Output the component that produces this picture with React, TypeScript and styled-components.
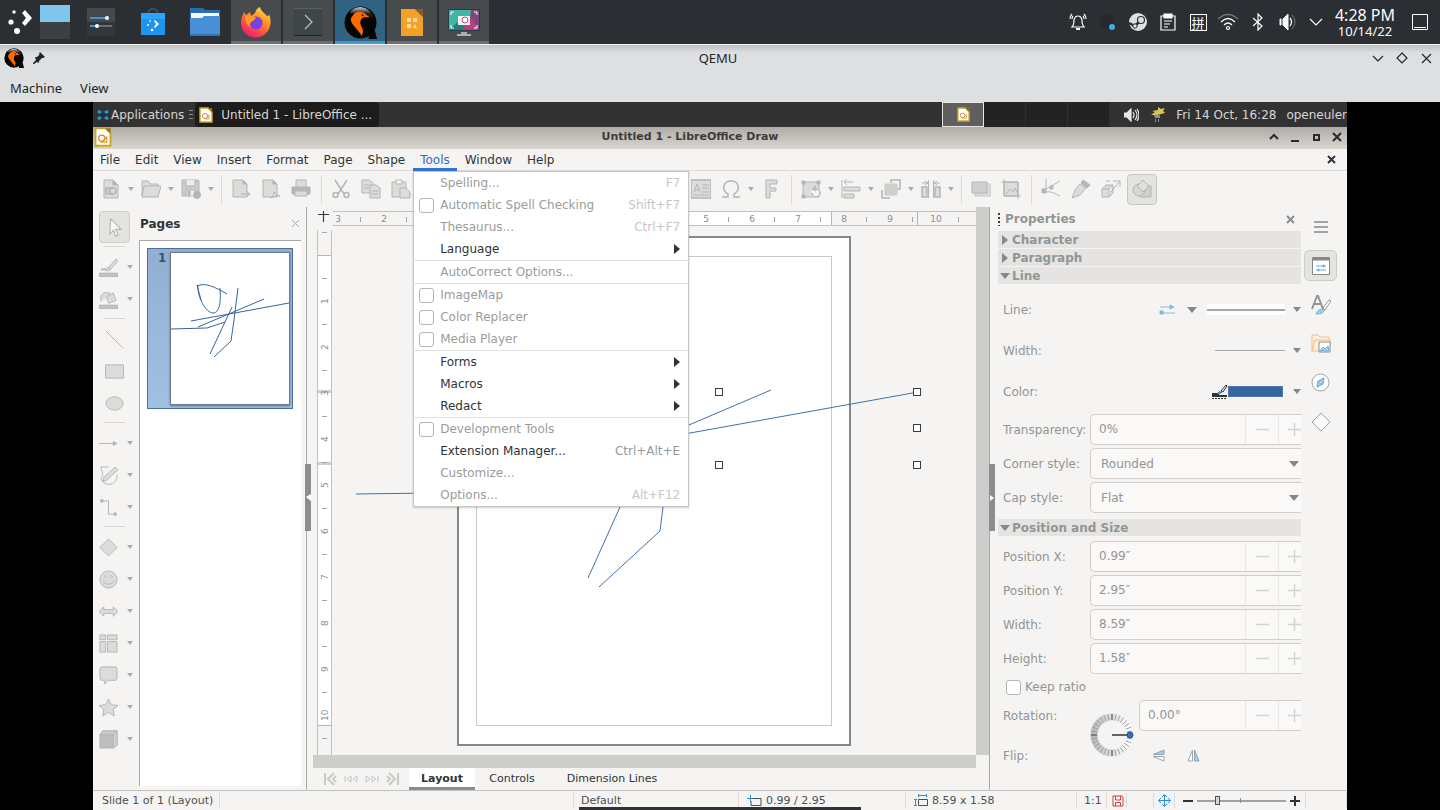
import React from "react";
import styled, { createGlobalStyle, css } from "styled-components";

const GUEST_FONT = '"DejaVu Sans", sans-serif';
const HOST_FONT = '"Noto Sans", "Noto Sans CJK SC", sans-serif';
const STROKE = "#b4b5b4";
const FILL = "#dcdcdb";
const INK = "#2e3436";
const DIM = "#929595";
const BLUE = "#3465a4";

const GlobalStyle = createGlobalStyle`
  *, *::before, *::after { box-sizing: border-box; }
  body { margin: 0; background: #000; overflow: hidden; }
  button { font: inherit; color: inherit; background: none; border: 0; padding: 0; margin: 0; }
  nav, ul { margin: 0; padding: 0; list-style: none; }
  svg { display: block; flex: none; }
`;

const Screen = styled.div`
  display: flex;
  flex-direction: column;
  height: 100vh;
`;

/* ---------- Icon drawings, all on a 20 unit grid ---------- */

const drawings: Record<string, React.ReactNode> = {
  new: <><path d="M3 1h9l5 5v13H3z" /><path d="M12 1v5h5z" fill={STROKE} /><path d="M5 15V9h7v6z" fill="#cbcbca" strokeWidth="1.500" /><circle cx="12" cy="12" r="3" strokeWidth="1.500" /></>,
  open: <><path d="M1 17V2h6l2 3h8v3" /><path d="M3 7h17l-3 11H1z" /></>,
  save: <><path d="M1 1h16l1 1v15H1z" fill="#cbcbca" /><path d="M5 1v6h9V1M5 17v-6h9v6" fill="#ececeb" /><path d="M7 12h2v5H7z" fill={STROKE} /><circle cx="16" cy="16" r="3.500" fill={STROKE} /></>,
  export: <><path d="M2 1h10l4 4v13H2z" /><path d="M12 1v4h4z" fill={STROKE} /><path d="M10 15h9M15 12l4 3-4 3" fill="none" /></>,
  pdf: <><path d="M2 1h10l4 4v13H2z" /><path d="M12 1v4h4z" fill={STROKE} /><path d="M9 19c2-1 4-3 4-6 1 3 3 4 6 4-3-1-6 0-10 2z" fill="#f5f4f2" /></>,
  print: <><path d="M5 8V1h10v7" /><path d="M1 8h18v7H1z" fill={STROKE} /><path d="M4 12h12v5H4z" /></>,
  cut: <><path d="M4 1l9 14M16 1L7 15" fill="none" strokeWidth="1.500" /><circle cx="4.500" cy="16" r="2.500" fill="none" strokeWidth="1.500" /><circle cx="15.500" cy="16" r="2.500" fill="none" strokeWidth="1.500" /></>,
  copy: <><path d="M1 1h7l4 3v10H1z" /><path d="M3 6h5M3 9h5" /><path d="M9 6h6l4 3v10H9z" /><path d="M11 12h6M11 15h6" /></>,
  paste: <><path d="M1 3h14v15H1z" /><path d="M5 1h6v4H5z" fill="#f5f4f2" /><path d="M9 9h6l4 4v6H9z" /></>,
  grid: <path d="M2 2h16v16H2zM2 7h16M2 12h16M7 2v16M12 2v16" />,
  undo: <path d="M5 4L2 8l4 3M2 8h10q6 0 6 6v3" fill="none" />,
  textbox: <><path d="M0 1h20v18H0z" strokeWidth="1.500" /><path d="M3 13L6 5l3 8M4 11h4M11 6h7M11 9h7M3 16h15M11 13h7" fill="none" strokeWidth="1" /></>,
  omega: <path d="M1 18h6v-3C0 11 2 2 10 2s10 9 3 13v3h6" fill="none" strokeWidth="1.500" />,
  fontwork: <path d="M5 1h11v4H9v4h6v3H9v7H5z" />,
  transform: <><path d="M2 3h16v15H2z" /><path d="M1 2h3v3H1zM16 2h3v3h-3zM1 16h3v3H1z" fill={STROKE} /><circle cx="15" cy="14" r="5" fill="#f5f4f2" stroke="none" /><path d="M11 14a4 4 0 1 0 4-4h-2M15 7l-3 3 3 2" fill="none" strokeWidth="1.500" /></>,
  align: <><path d="M1 1v18M3 3h9M6 0L3 3l3 3" fill="none" /><path d="M3 8h16v4H3zM3 15h10v4H3z" /></>,
  arrange: <><path d="M10 4V1h9v9h-3M1 11v8h8" fill="none" strokeWidth="1.500" /><path d="M4 5h12v11H4z" fill="#d0d0cf" stroke="#cacaca" /></>,
  distribute: <><path d="M1 8h5v10H1zM14 8h5v10h-5z" strokeWidth="1.500" /><path d="M7.500 1v18M12.500 1v18M1 4h6M19 4h-6M4 2l3 2-3 2M16 2l-3 2 3 2" fill="none" /></>,
  shadow: <><path d="M4 5h16v12H4z" fill={FILL} stroke="#c8c8c8" /><path d="M1 3h15v11H1z" fill="#cfcfce" /></>,
  crop: <><path d="M3 3h14v14H3z" /><path d="M0 3h17v17M3 0v17h17M5 15l4-5 3 3 2-4 3 6" fill="none" /></>,
  points: <><path d="M5 0v10l14-8M5 13c6-1 9 2 14 4" fill="none" /><path d="M1 10h4v4H1zM9 7h3v3H9z" fill={STROKE} /></>,
  glue: <><path d="M9 5l6 4-6 7-8 3 3-8z" /><path d="M12 1l7 5-3 3-6-5z" fill={STROKE} /></>,
  extrude: <><path d="M1 10h7v8H1zM1 10l4-4h7l-4 4M12 6v8l-4 4" /><path d="M5 2h4M12 2h7l-9 11M19 2v6" fill="none" /></>,
  shapes: <><path d="M8 7h11v11H8z" fill="#cfcfce" /><circle cx="7" cy="11" r="6" fill="#d6d6d4" /><path d="M11 1l6 6-6 6-6-6z" fill="#dfdfdc" /></>,
  pointer: <path d="M6 1l11 11h-6l3 6-3 1-2-6-4 4z" fill="#fafaf9" strokeWidth="1.2" />,
  lineColor: <><path d="M2 12h7" strokeWidth="2" /><path d="M10 10l8-9 2 2-8 9zM7 13c0-3 3-4 5-1-1 2-3 2-5 1z" /><path d="M0 16h20v4H0z" fill="#c2c2c2" /></>,
  fillColor: <><path d="M2 12V6l3-3h6v4M8 7l7-4 3 8-8 3z" /><path d="M0 16h20v4H0z" fill="#c2c2c2" /></>,
  line: <path d="M1 1l18 18" />,
  rect: <path d="M0.500 3h19v14h-19z" />,
  ellipse: <ellipse cx="10" cy="10" rx="9" ry="7" />,
  arrow: <><path d="M0 10h17" /><path d="M15 8l4 2-4 2z" fill={STROKE} /></>,
  curve: <><path d="M2 1h8M2 1l2 9-2 4 4 4M19 9c1 12-12 13-16 6" fill="none" /><path d="M17 1l3 3L8 15l-4 1 1-4z" /></>,
  connector: <><path d="M3 3h7v14h7" fill="none" /><circle cx="3" cy="3" r="1.500" fill={STROKE} /><circle cx="17" cy="17" r="1.500" fill={STROKE} /></>,
  diamond: <path d="M10 1l9 9-9 9-9-9z" />,
  smiley: <><circle cx="10" cy="10" r="9" /><circle cx="7" cy="7" r="1" fill="#fff" /><circle cx="13" cy="7" r="1" fill="#fff" /><path d="M4 12q6 6 12 0" fill="none" /></>,
  doubleArrow: <path d="M0 10l5-5v3h10V5l5 5-5 5v-3H5v3z" />,
  flow: <path d="M1 1h6v5H1zM9 1h10v5H9zM1 8h6v11H1zM9 8h10v11H9z" />,
  callout: <path d="M2 1h16l1 2v10l-1 2H10l-4 4v-4H2l-1-2V3z" />,
  star: <path d="M10 1l3 6 7 1-5 4 1 7-6-4-6 4 1-7-5-4 7-1z" />,
  cube: <><path d="M1 5l3-4h15v15l-4 3H1z" fill="#bdbdbd" /><path d="M1 5l3-4h15l-4 4z" fill="#c9c9c8" /><path d="M15 5l4-4v15l-4 3z" fill="#d0d0cf" /></>,
};

function Glyph({ name, size = 19 }: { name: string; size?: number }) {
  return (
    <svg width={size} height={size} viewBox="0 0 20 20" fill={FILL} stroke={STROKE} strokeWidth="1" aria-hidden="true">
      {drawings[name]}
    </svg>
  );
}

const Triangle = styled.span<{ $right?: boolean; $color?: string; $size?: number }>`
  flex: none;
  width: 0;
  height: 0;
  border: ${(p) => p.$size ?? 3}px solid transparent;
  ${(p) =>
    p.$right
      ? css`
          border-left: ${(p.$size ?? 3) + 1}px solid ${p.$color ?? "#a9abab"};
          border-right: 0;
        `
      : css`
          border-top: ${(p.$size ?? 3) + 1}px solid ${p.$color ?? "#a9abab"};
          border-bottom: 0;
        `}
`;

/* ---------- Host desktop ---------- */

const Taskbar = styled.header`
  display: flex;
  align-items: center;
  flex: none;
  height: 44px;
  padding: 0 12px 0 0;
  background: #2b2e32;
  color: #fcfcfc;
  font-family: ${HOST_FONT};
`;

const Launcher = styled.button`
  display: grid;
  place-items: center;
  width: 40px;
  height: 44px;
`;

const Pager = styled.div`
  width: 30px;
  height: 34px;
  margin-right: 5px;
  background: linear-gradient(#7fc5ec 50%, #3c4044 50%);
`;

const AppButton = styled.button<{ $state?: "open" | "active" }>`
  display: grid;
  place-items: center;
  width: ${(p) => (p.$state ? 50 : 52)}px;
  height: 44px;
  margin-right: ${(p) => (p.$state ? 2 : 0)}px;
  ${(p) => p.$state === "open" && css`background: linear-gradient(#484b4e 41px, #6c6e71 41px);`}
  ${(p) => p.$state === "active" && css`background: linear-gradient(#306381 41px, #3d9bd1 41px);`}
`;

const Tray = styled.div`
  display: flex;
  align-items: center;
  margin-left: auto;
`;

const TrayButton = styled.button<{ $w?: number }>`
  display: grid;
  place-items: center;
  width: ${(p) => p.$w ?? 30}px;
  height: 44px;
`;

const HostClock = styled.time`
  display: flex;
  flex-direction: column;
  align-items: center;
  width: 66px;
  margin: 0 14px 0 3px;
  font-size: 13px;
  line-height: 14px;
  strong { font-size: 16px; line-height: 18px; font-weight: 400; }
`;

const HostWindow = styled.div`
  flex: none;
  height: 58px;
  border-top: 1px solid #f4f4f4;
  background: linear-gradient(#bfc0c2, #dddfe1 8px);
  color: #232629;
  font-family: ${HOST_FONT};
  font-size: 13px;
  line-height: 18px;
`;

const HostTitle = styled.div`
  display: grid;
  grid-template-columns: 1fr auto 1fr;
  align-items: center;
  height: 26px;
  padding: 0 8px 0 4px;
`;

const HostTitleGroup = styled.div<{ $end?: boolean }>`
  display: flex;
  align-items: center;
  gap: ${(p) => (p.$end ? 12 : 8)}px;
  justify-content: ${(p) => (p.$end ? "flex-end" : "flex-start")};
`;

const HostMenu = styled.nav`
  display: flex;
  align-items: center;
  gap: 18px;
  height: 31px;
  padding: 2px 0 0 10px;
`;

function QemuLogo({ size }: { size: number }) {
  return (
    <svg width={size} height={size} viewBox="0 0 32 32">
      <defs>
        <linearGradient id="qemuShine" x1="0" y1="0" x2="0" y2="1">
          <stop offset="0" stopColor="#c8c8c8" />
          <stop offset=".6" stopColor="#1a1a1a" />
        </linearGradient>
      </defs>
      <circle cx="16" cy="16" r="15.5" fill="#050505" />
      <path d="M5 7Q9 1 16 1Q26 2 29 12Q22 8 15 8Z" fill="url(#qemuShine)" />
      <path d="M24 24h6l2 8h-8z" fill="#050505" />
      <path d="M8 10C11 4 18 5 21 8l4 3-6 0c-4 2-4 7-1 11 1 3 0 5-1 7-2-5-8-9-10-14C6 13 7 11 8 10z" fill="#ff6a00" />
      <circle cx="18" cy="9" r="1" fill="#2a1000" />
    </svg>
  );
}

function HostTaskbar() {
  return (
    <Taskbar>
      <Launcher aria-label="Application launcher">
        <svg width="24" height="26" viewBox="0 0 24 26" fill="#fff">
          <circle cx="6" cy="3" r="1.7" /><circle cx="3" cy="13" r="2.6" /><circle cx="9" cy="22" r="3" />
          <path d="M14 4l3-3 7 8-7 8-3-3 4-5z" />
        </svg>
      </Launcher>
      <Pager />
      <AppButton aria-label="System Settings">
        <svg width="28" height="28" viewBox="0 0 28 28">
          <path d="M0 0h28v28H0z" fill="#33373a" /><path d="M0 0h28v14H0z" fill="#45494c" />
          <path d="M3 10h18" stroke="#3f93cf" strokeWidth="2" /><circle cx="20" cy="10" r="2" fill="#fff" />
          <path d="M3 18h6" stroke="#3f93cf" strokeWidth="2" /><path d="M10 18h15" stroke="#6b6e72" strokeWidth="2" /><circle cx="10" cy="18" r="2" fill="#fff" />
        </svg>
      </AppButton>
      <AppButton aria-label="Discover">
        <svg width="24" height="28" viewBox="0 0 24 28">
          <path d="M7 9V6q0-5 5-5t5 5v3" fill="none" stroke="#2d5d78" strokeWidth="1.5" />
          <path d="M0 5h24v22H0z" fill="#1d94ee" /><path d="M0 5h24v6H0z" fill="#28a5fb" />
          <path d="M13 13l1-1 4 4-4 4-1-1 2-3z" fill="#fff" /><circle cx="9" cy="13" r="1" fill="#bfe3ff" /><circle cx="7" cy="17" r="1" fill="#fff" /><circle cx="11" cy="22" r="1.300" fill="#fff" />
        </svg>
      </AppButton>
      <AppButton aria-label="Files">
        <svg width="30" height="28" viewBox="0 0 30 28">
          <path d="M0 0h13l2 2h15v10H0z" fill="#2c6ea9" /><path d="M1 5h28v8H1z" fill="#f4f8fb" />
          <path d="M0 10h12l2-2h16v20H0z" fill="#4790d8" /><path d="M0 26h30v2H0z" fill="#3475b9" />
        </svg>
      </AppButton>
      <AppButton $state="open" aria-label="Firefox">
        <svg width="32" height="32" viewBox="0 0 32 32">
          <defs>
            <linearGradient id="foxBody" x1=".8" y1="0" x2=".2" y2="1">
              <stop offset="0" stopColor="#ffe243" /><stop offset=".4" stopColor="#ff8a22" /><stop offset=".75" stopColor="#ff3a55" /><stop offset="1" stopColor="#e2177f" />
            </linearGradient>
          </defs>
          <path d="M20 1c1 5 5 6 7 9 1 1 2-1 2-2 2 4 3 14-3 19-6 6-16 6-21 0C1 23 0 16 2 11l2-5 2 3 4-3 1 4 4-3c1-3 2-5 5-6z" fill="url(#foxBody)" />
          <circle cx="16" cy="17" r="6.5" fill="#7542e5" />
          <path d="M5 10c4-2 8 0 11 2l-3 3c-3 1-4 4-2 6-3 0-6-5-6-11z" fill="#ff9a24" />
        </svg>
      </AppButton>
      <AppButton $state="open" aria-label="Terminal">
        <svg width="28" height="28" viewBox="0 0 28 28">
          <path d="M0 0h28v28H0z" fill="#3f4649" /><path d="M0 27.500h28" stroke="#202427" />
          <path d="M0 .5h28" stroke="#566064" /><path d="M11 7l7 7-7 7" fill="none" stroke="#b5bbbd" strokeWidth="1.3" />
        </svg>
      </AppButton>
      <AppButton $state="active" aria-label="QEMU"><QemuLogo size={33} /></AppButton>
      <AppButton $state="open" aria-label="LibreOffice Draw">
        <svg width="22" height="27" viewBox="0 0 22 27">
          <path d="M0 0h14l8 8v19H0z" fill="#f2a127" /><path d="M14 0h8v8z" fill="#8a5c14" />
          <path d="M6 9h4v4H6zM12 9h4v4h-4zM6 15h4v4H6zM14 15l2 4h-4z" fill="#fbd79c" />
        </svg>
      </AppButton>
      <AppButton $state="open" aria-label="Spectacle">
        <svg width="32" height="28" viewBox="0 0 32 28">
          <path d="M0 1h32v22H0z" fill="#2c3c44" /><path d="M1 2h30v20H1z" fill="#43b5a8" /><path d="M1 22L14 10l8 12z" fill="#247f7c" /><path d="M23 2h8v20H20z" fill="#7a4a78" /><path d="M14 22l10-12 6 12z" fill="#c13d83" />
          <path d="M3 7V4h3M26 4h3v3M3 17v3h3M26 20h3v-3" fill="none" stroke="#fff" />
          <path d="M10 8h12v9H10z" fill="#f5f5f5" /><circle cx="17" cy="12" r="3" fill="#fff" stroke="#c0506f" /><path d="M13 25h6M9 27h14" stroke="#d0d0d0" strokeWidth="1.500" />
        </svg>
      </AppButton>

      <Tray>
        <TrayButton aria-label="Notifications">
          <svg width="18" height="18" viewBox="0 0 18 18" fill="none" stroke="#fcfcfc" strokeWidth="1.2">
            <path d="M3 14h12q-2-2-2-7-1-4-4-4T5 7q0 5-2 7zM1 6q0-3 2-5M17 6q0-3-2-5M3 6q0-2 1-3M15 6q0-2-1-3" /><path d="M7 16h4" strokeWidth="2" />
          </svg>
        </TrayButton>
        <TrayButton aria-label="Sync status">
          <svg width="18" height="18" viewBox="0 0 18 18"><circle cx="8" cy="8" r="7" fill="#25282c" /><circle cx="13" cy="14" r="3" fill="#3daee9" /></svg>
        </TrayButton>
        <TrayButton aria-label="Steam">
          <svg width="18" height="18" viewBox="0 0 18 18">
            <circle cx="9" cy="9" r="9" fill="#dedfe0" /><path d="M0 10l6 3 5-5" fill="none" stroke="#2b2e32" strokeWidth="2.500" />
            <circle cx="12" cy="7" r="3.500" fill="#dedfe0" stroke="#2b2e32" strokeWidth="1.200" /><circle cx="6" cy="13" r="2.200" fill="#dedfe0" stroke="#2b2e32" />
          </svg>
        </TrayButton>
        <TrayButton aria-label="Clipboard">
          <svg width="16" height="18" viewBox="0 0 16 18" fill="none" stroke="#fcfcfc" strokeWidth="1.200"><path d="M1 3h14v14H1zM4 8h8M4 11h6M4 14h4" /><path d="M4 1h8v4H4z" fill="#fcfcfc" /></svg>
        </TrayButton>
        <TrayButton aria-label="Input method"><InputBadge lang="zh-CN">拼</InputBadge></TrayButton>
        <TrayButton aria-label="Network">
          <svg width="22" height="18" viewBox="0 0 22 18" fill="none" stroke="#fcfcfc" strokeWidth="1.200">
            <path d="M1 6q10-9 20 0" stroke="#74777a" /><path d="M4 9q7-7 14 0M7 12q4-4 8 0" /><circle cx="11" cy="15" r="1.500" />
          </svg>
        </TrayButton>
        <TrayButton aria-label="Bluetooth">
          <svg width="12" height="18" viewBox="0 0 12 18" fill="none" stroke="#fcfcfc" strokeWidth="1.200"><path d="M1 5l9 8-4 4V1l4 4-9 8" /></svg>
        </TrayButton>
        <TrayButton aria-label="Volume">
          <svg width="18" height="18" viewBox="0 0 18 18" fill="none" stroke="#fcfcfc"><path d="M1 6h1v6H1zM4 6l5-5v16l-5-5z" fill="#fcfcfc" /><path d="M11 5q3 4 0 8" strokeWidth="1.300" /><path d="M13 2q6 7 0 14" stroke="#74777a" /></svg>
        </TrayButton>
        <TrayButton $w={26} aria-label="Show hidden icons">
          <svg width="14" height="8" viewBox="0 0 14 8" fill="none" stroke="#fcfcfc" strokeWidth="1.200"><path d="M1 1l6 6 6-6" /></svg>
        </TrayButton>
        <HostClock><strong>4:28 PM</strong><span>10/14/22</span></HostClock>
        <TrayButton $w={16} aria-label="Show desktop">
          <svg width="16" height="16" viewBox="0 0 16 16" fill="none" stroke="#fcfcfc"><path d="M.5.5h15v15H.5zM2 13.500h12" /></svg>
        </TrayButton>
      </Tray>
    </Taskbar>
  );
}

const InputBadge = styled.span`
  display: flex;
  align-items: center;
  justify-content: center;
  width: 17px;
  height: 17px;
  border: 1px solid #fcfcfc;
  font: 13px "Noto Sans CJK SC", sans-serif;
  line-height: 15px;
`;

function HostFrame() {
  return (
    <HostWindow>
      <HostTitle>
        <HostTitleGroup>
          <QemuLogo size={20} />
          <svg width="14" height="14" viewBox="0 0 14 14" fill="#232629"><path d="M8 2l4 4-1 1-1 0-3 3v2l-2-1-3 2-1 0 0-1 3-3-1-3h2l3-3z" /><path d="M8 1l5 5-2 1-4-4z" /></svg>
        </HostTitleGroup>
        <span>QEMU</span>
        <HostTitleGroup $end>
          <button aria-label="Minimize"><svg width="12" height="12" viewBox="0 0 12 12" fill="none" stroke="#232629" strokeWidth="1.200"><path d="M1 4l5 5 5-5" /></svg></button>
          <button aria-label="Maximize"><svg width="12" height="12" viewBox="0 0 12 12" fill="none" stroke="#232629" strokeWidth="1.200"><path d="M6 1l5 5-5 5-5-5z" /></svg></button>
          <button aria-label="Close"><svg width="12" height="12" viewBox="0 0 12 12" fill="none" stroke="#232629" strokeWidth="1.200"><path d="M2 2l9 9M11 2l-9 9" /></svg></button>
        </HostTitleGroup>
      </HostTitle>
      <HostMenu><button>Machine</button><button>View</button></HostMenu>
    </HostWindow>
  );
}

/* ---------- Guest desktop ---------- */

const Display = styled.div`
  flex: 1;
  min-height: 0;
  display: flex;
  padding: 0 93px;
  background: #000;
`;

const Guest = styled.div`
  flex: 1;
  min-width: 0;
  display: flex;
  flex-direction: column;
  overflow: hidden;
  background: #f5f4f2;
  color: ${INK};
  font-family: ${GUEST_FONT};
  font-size: 12px;
  line-height: 16px;
`;

const GuestPanel = styled.div`
  display: flex;
  align-items: center;
  flex: none;
  height: 25px;
  padding-left: 4px;
  background: #323232;
  color: #d6d6d6;
  white-space: nowrap;
`;

const AppsButton = styled.button`
  display: flex;
  align-items: center;
  gap: 2px;
`;

const PanelGrip = styled.span`
  width: 4px;
  height: 9px;
  margin: 0 2px 0 5px;
  background: repeating-linear-gradient(#8a8a8a 0 1px, transparent 1px 4px);
`;

const TaskButton = styled.button`
  display: flex;
  align-items: center;
  gap: 8px;
  width: 184px;
  height: 25px;
  padding-left: 4px;
  border-radius: 4px;
  background: #1c1c1c;
`;

const GuestPager = styled.div`
  display: grid;
  grid-template-columns: repeat(4, 42px);
  height: 25px;
  margin-left: auto;
  background: #232323;
`;

const PagerCell = styled.div<{ $active?: boolean }>`
  display: grid;
  place-items: center;
  border-right: 1px solid #303030;
  ${(p) => p.$active && css`background: #5f5f5f; border: 1px solid #e6e6e6;`}
`;

const GuestStatus = styled.div`
  display: flex;
  align-items: center;
  padding-left: 14px;
  gap: 10px;
`;

function DrawIcon({ w = 14 }: { w?: number }) {
  return (
    <svg width={w} height={w + 2} viewBox="0 0 14 16">
      <path d="M1 1h8l4 4v10H1z" fill="#fff" stroke="#c9a52a" strokeWidth="1.500" /><path d="M9 1h4v4z" fill="#8e7217" />
      <circle cx="6" cy="9" r="2.500" fill="none" stroke="#e07a4a" /><path d="M6 12l4-4v4z" fill="none" stroke="#d9a21d" />
    </svg>
  );
}

const TitleBar = styled.div`
  display: grid;
  grid-template-columns: auto 1fr auto;
  align-items: center;
  flex: none;
  height: 22px;
  padding: 0 4px 2px 1px;
  background: linear-gradient(#b0aba7, #d9d5d1);
  font-size: 11px;
  font-weight: 700;
  color: #3c3c3a;
  text-align: center;
`;

const WindowButtons = styled.div`
  display: flex;
  justify-content: flex-end;
  gap: 9px;
`;

const MenuBar = styled.nav`
  display: flex;
  align-items: stretch;
  gap: 1px;
  flex: none;
  height: 22px;
  border-bottom: 1px solid #dcdad8;
`;

const MenuHost = styled.div`
  position: relative;
  display: flex;
`;

const MenuButton = styled.button<{ $open?: boolean }>`
  height: 22px;
  padding: 3px 7px 0;
  border-bottom: 3px solid ${(p) => (p.$open ? "#3071cc" : "transparent")};
  color: ${(p) => (p.$open ? "#2f6dc0" : "inherit")};
`;

const MenuClose = styled.button`
  margin: 0 11px 0 auto;
`;

const Dropdown = styled.ul`
  position: absolute;
  z-index: 10;
  top: 22px;
  left: 0;
  width: 276px;
  border: 1px solid #c9c7c5;
  background: #fff;
  box-shadow: 0 1px 2px rgba(0, 0, 0, 0.2);
`;

const DropItem = styled.li<{ $disabled?: boolean; $rule?: boolean }>`
  display: grid;
  grid-template-columns: 26px 1fr auto;
  align-items: center;
  height: ${(p) => (p.$rule ? 23 : 22)}px;
  padding-right: 8px;
  border-top: ${(p) => (p.$rule ? "1px solid #e0e0df" : "0")};
  color: ${(p) => (p.$disabled ? "#9a9c9c" : INK)};
  label, button { text-align: left; white-space: nowrap; }
`;

const Shortcut = styled.span<{ $disabled?: boolean }>`
  color: ${(p) => (p.$disabled ? "#c6c7c7" : "#96999a")};
`;

const Check = styled.input`
  appearance: none;
  width: 15px;
  height: 15px;
  margin: 0 0 0 5px;
  border: 1px solid #b4b4b3;
  border-radius: 3px;
  background: #fff;
`;

type Entry = { text: string; key?: string; check?: boolean; sub?: boolean; on?: boolean; rule?: boolean };
const entries: Entry[] = [
  { text: "Spelling...", key: "F7" },
  { text: "Automatic Spell Checking", key: "Shift+F7", check: true },
  { text: "Thesaurus...", key: "Ctrl+F7" },
  { text: "Language", sub: true, on: true },
  { text: "AutoCorrect Options...", rule: true },
  { text: "ImageMap", check: true, rule: true },
  { text: "Color Replacer", check: true },
  { text: "Media Player", check: true },
  { text: "Forms", sub: true, on: true, rule: true },
  { text: "Macros", sub: true, on: true },
  { text: "Redact", sub: true, on: true },
  { text: "Development Tools", check: true, rule: true },
  { text: "Extension Manager...", key: "Ctrl+Alt+E", on: true },
  { text: "Customize..." },
  { text: "Options...", key: "Alt+F12" },
];

function ToolsMenu() {
  return (
    <Dropdown>
      {entries.map((e) => {
        const id = "tool-" + e.text.replace(/\W/g, "");
        return (
          <DropItem key={e.text} $disabled={!e.on} $rule={e.rule}>
            {e.check ? <Check type="checkbox" id={id} disabled /> : <span />}
            {e.check ? <label htmlFor={id}>{e.text}</label> : <button disabled={!e.on}>{e.text}</button>}
            {e.sub ? <Triangle $right $color={INK} $size={5} /> : <Shortcut $disabled={!e.on}>{e.key}</Shortcut>}
          </DropItem>
        );
      })}
    </Dropdown>
  );
}

const Toolbar = styled.div`
  display: flex;
  align-items: center;
  flex: none;
  height: 36px;
  padding-left: 4px;
`;

const ToolButton = styled.button<{ $drop?: boolean; $active?: boolean }>`
  display: flex;
  align-items: center;
  justify-content: space-between;
  flex: none;
  width: ${(p) => (p.$drop ? 40 : 30)}px;
  height: 31px;
  padding: 0 3px 0 4px;
  ${(p) => p.$active && css`border: 1px solid #c8c7c3; border-radius: 4px; background: #e3e3df;`}
`;

const ToolRule = styled.span`
  flex: none;
  width: 1px;
  height: 29px;
  margin: 0 5px 0 4px;
  background: #dcdbd9;
`;

const tools = [
  "new▾", "open▾", "save▾", "|", "export", "pdf", "print", "|", "cut", "copy", "paste",
  "copy", "undo▾", "undo▾", "|", "grid", "grid", "|", "rect▾", "crop", "|",
  "textbox", "omega▾", "fontwork", "|", "transform▾", "align▾", "arrange▾", "distribute▾", "|",
  "shadow", "crop", "|", "points", "glue", "extrude", "shapes*",
];

/* ---------- Draw workspace ---------- */

const Main = styled.div`
  display: flex;
  flex: 1;
  min-height: 0;
`;

const DrawBar = styled.div`
  display: flex;
  flex-direction: column;
  flex: none;
  width: 46px;
  padding: 4px 6px 0;
  overflow: hidden;
`;

const DrawButton = styled.button<{ $drop?: boolean; $selected?: boolean }>`
  display: flex;
  align-items: center;
  justify-content: ${(p) => (p.$drop ? "space-between" : "center")};
  flex: none;
  width: ${(p) => (p.$drop ? 34 : 31)}px;
  height: 32px;
  ${(p) => p.$selected && css`border: 1px solid #cdccc7; border-radius: 4px; background: #e4e4df;`}
`;

const DrawRule = styled.span`
  flex: none;
  width: 21px;
  height: 1px;
  margin: 3px 0 4px 5px;
  background: #d6d5d3;
`;

const drawTools = [
  "pointer*", "-", "lineColor▾", "fillColor▾", "-", "line", "rect", "ellipse", "-", "arrow▾", "curve▾", "connector▾",
  "-", "diamond▾", "smiley▾", "doubleArrow▾", "flow▾", "callout▾", "star▾", "cube▾",
];

const PagesPanel = styled.section`
  position: relative;
  display: flex;
  flex-direction: column;
  flex: none;
  width: 168px;
  padding: 0 5px 4px 0;
  border-right: 1px solid #a9a9a8;
`;

const PagesHeader = styled.div`
  display: flex;
  align-items: center;
  justify-content: space-between;
  height: 33px;
  padding: 0 1px;
  font-weight: 700;
`;

const PagesList = styled.div`
  flex: 1;
  padding: 7px;
  border: solid #a9a9a8;
  border-width: 1px 0 0 1px;
  background: #fff;
`;

const Thumb = styled.button`
  display: flex;
  justify-content: space-between;
  align-items: flex-start;
  width: 146px;
  height: 161px;
  padding: 3px 2px 3px 10px;
  border: 1px solid #4d6f9a;
  background: linear-gradient(#92afd3, #a0c0e4);
  font-weight: 700;
  line-height: 12px;
  color: #3d5069;
`;

const ThumbPage = styled.span`
  width: 120px;
  height: 153px;
  border: 1px solid #707b88;
  background: #fff;
  box-shadow: 0 1px 2px rgba(50, 60, 80, 0.6);
`;

const PanelHandle = styled.button<{ $left?: boolean }>`
  position: absolute;
  z-index: 2;
  top: 257px;
  ${(p) => (p.$left ? "left: -1px;" : "right: -5px;")}
  display: flex;
  align-items: center;
  justify-content: center;
  width: 6px;
  height: 67px;
  background: #8b8d8f;
`;

const Editor = styled.section`
  flex: 1;
  min-width: 0;
  display: flex;
  flex-direction: column;
`;

const EditorTop = styled.div`
  display: flex;
  flex: 1;
  min-height: 0;
`;

const Workspace = styled.div`
  flex: 1;
  min-width: 0;
  display: grid;
  grid-template-columns: 20px 1fr;
  grid-template-rows: 19px 1fr;
  padding-left: 6px;
`;

const VScroll = styled.div`
  flex: none;
  width: 13px;
  background: #cdcdcc;
`;

const HScroll = styled.div`
  flex: none;
  height: 13px;
  margin: 0 13px 0 6px;
  background: #cdcdcc;
`;

const Corner = styled.div`
  display: grid;
  place-items: center;
`;

const HRuler = styled.div`
  display: flex;
  align-items: center;
  min-width: 0;
  height: 15px;
  margin-top: 4px;
  overflow: hidden;
  border: solid #c2c1c0;
  border-width: 1px 0;
  background: linear-gradient(90deg, #f5f4f2 143px, #fff 143px 498px, #b4b4b3 498px 499px, #f5f4f2 499px 584px, #b4b4b3 584px 585px, #f5f4f2 585px);
  color: #8b8d8e;
  font-size: 9px;
  line-height: 12px;
`;

const HTick = styled.span<{ $first?: boolean }>`
  display: flex;
  align-items: center;
  justify-content: center;
  flex: none;
  width: 46px;
  height: 12px;
  margin-left: ${(p) => (p.$first ? -18 : 0)}px;
  background: linear-gradient(#a5a5a5, #a5a5a5) right 4px / 1px 5px no-repeat;
`;

const VRuler = styled.div`
  display: flex;
  flex-direction: column;
  align-items: center;
  width: 15px;
  min-height: 0;
  height: calc(100% - 4px);
  margin: 4px 0 0 4px;
  padding-top: 2px;
  overflow: hidden;
  border: solid #c2c1c0;
  border-width: 0 1px;
  background: linear-gradient(#f5f4f2 25px, #b4b4b3 25px 26px, #fff 26px 160px, #cfcfce 160px 163px, #fff 163px 232px, #cfcfce 232px 235px, #fff 235px 495px, #b4b4b3 495px 496px, #f5f4f2 496px);
  color: #8b8d8e;
  font-size: 9px;
  line-height: 12px;
`;

const VTick = styled.span`
  display: flex;
  align-items: center;
  justify-content: center;
  flex: none;
  width: 13px;
  height: 46px;
  writing-mode: vertical-rl;
  rotate: 180deg;
  background: linear-gradient(#a5a5a5, #a5a5a5) 4px bottom / 5px 1px no-repeat;
`;

const Canvas = styled.div`
  position: relative;
  min-width: 0;
  overflow: hidden;
`;

const Sheet = styled.div`
  position: absolute;
  left: 124px;
  top: 10px;
  width: 394px;
  height: 510px;
  padding: 18px 17px;
  border: 2px solid #878787;
  background: #fff;
  &::before { content: ""; display: block; height: 100%; border: 1px solid #c9c9c9; }
`;

const Drawing = styled.svg`
  position: absolute;
  left: 0;
  top: 0;
`;

const LayerTabs = styled.div`
  display: flex;
  flex: none;
  height: 22px;
  padding-left: 12px;
  font-size: 11px;
`;

const LayerNav = styled.button`
  width: 21px;
  display: grid;
  place-items: center;
`;

const LayerTab = styled.button<{ $active?: boolean; $w: number }>`
  width: ${(p) => p.$w}px;
  padding-top: 2px;
  border-bottom: 3px solid transparent;
  ${(p) => p.$active && css`background: #fff; border-color: #8b8d8f; font-weight: 700; margin-left: 6px;`}
`;

function Editing() {
  return (
    <Editor>
      <EditorTop>
        <Workspace>
          <Corner><svg width="13" height="13" viewBox="0 0 13 13" stroke="#3c3c3c"><path d="M1 4.500h11M6.500 1v11" strokeWidth="1.200" /></svg></Corner>
          <HRuler>
            {["3", "2", "1", "", "1", "2", "3", "4", "5", "6", "7", "8", "9", "10", ""].map((n, i) => (
              <HTick key={i} $first={i === 0}>{n}</HTick>
            ))}
          </HRuler>
          <VRuler>
            {["", "1", "2", "3", "4", "5", "6", "7", "8", "9", "10", ""].map((n, i) => <VTick key={i}>{n}</VTick>)}
          </VRuler>
          <Canvas>
            <Sheet />
            <Drawing width="643" height="529" viewBox="333 226 643 529" fill="none" stroke="#4270ae">
              <path d="M356 494l74-1 80-8M620 507l-32 71M620 507l42-80M663 507l-3 24-61 56M663 507l8-80M560 480l211-90M540 460l378-68" />
              {[[719, 392], [917, 392], [917, 428], [719, 465], [917, 465]].map(([x, y]) => (
                <rect key={x + "-" + y} x={x - 3.5} y={y - 3.5} width="7" height="7" fill="#fff" stroke="#3c3c3c" />
              ))}
            </Drawing>
          </Canvas>
        </Workspace>
        <VScroll />
      </EditorTop>
      <HScroll />
      <LayerTabs>
        {["M3 2v12M12 2L6 8l6 6M14 5l-3 3 3 3", "M2 5v6M8 5L4 8l4 3zM14 5l-4 3 4 3z", "M14 5v6M8 5l4 3-4 3zM2 5l4 3-4 3z", "M13 2v12M4 2l6 6-6 6M2 5l3 3-3 3"].map((d, i) => (
          <LayerNav key={i} aria-label={["First", "Previous", "Next", "Last"][i]}>
            <svg width="16" height="16" viewBox="0 0 16 16" fill="none" stroke={i % 3 ? "#c4c4c3" : "#c9c9c8"} strokeWidth={i % 3 ? 1 : 2}><path d={d} /></svg>
          </LayerNav>
        ))}
        <LayerTab $active $w={66}>Layout</LayerTab>
        <LayerTab $w={74}>Controls</LayerTab>
        <LayerTab $w={126}>Dimension Lines</LayerTab>
      </LayerTabs>
    </Editor>
  );
}

/* ---------- Properties sidebar ---------- */

const Sidebar = styled.aside`
  position: relative;
  display: flex;
  flex: none;
  width: 358px;
  border-left: 1px solid #a9a9a8;
  color: ${DIM};
`;

const Deck = styled.div`
  flex: 1;
  min-width: 0;
  padding-left: 8px;
  overflow: hidden;
`;

const DeckHeader = styled.div`
  display: flex;
  align-items: center;
  gap: 5px;
  height: 24px;
  font-weight: 700;
  button { margin: 0 6px 0 auto; }
`;

const Grip = styled.span`
  width: 2px;
  height: 13px;
  background: repeating-linear-gradient(#3c3c3c 0 2px, transparent 2px 4px);
`;

const SectionHead = styled.button<{ $gap?: number; $open?: boolean }>`
  display: flex;
  align-items: center;
  gap: ${(p) => (p.$open ? 2 : 4)}px;
  width: 100%;
  height: 17px;
  margin-top: ${(p) => p.$gap ?? 1}px;
  padding-left: ${(p) => (p.$open ? 2 : 4)}px;
  background: #e5e4e2;
  font-weight: 700;
`;

const LineRows = styled.div`
  padding: 5px 0 2px 5px;
`;

const LineRow = styled.div`
  display: flex;
  align-items: center;
  height: 41px;
  > span:first-child { margin-right: auto; }
`;

const LineArrow = styled.button<{ $wide?: boolean }>`
  display: flex;
  justify-content: flex-end;
  width: ${(p) => (p.$wide ? 18 : 16)}px;
`;

const StyleButton = styled.button`
  display: flex;
  align-items: center;
  gap: 12px;
  margin-right: 10px;
`;

const Sample = styled.span<{ $w: number; $h: number; $bg?: string }>`
  display: flex;
  align-items: center;
  width: ${(p) => p.$w}px;
  height: 11px;
  background: ${(p) => p.$bg ?? "transparent"};
  &::before { content: ""; width: 100%; height: ${(p) => p.$h}px; background: #a5a6a6; }
`;

const Swatch = styled.span`
  width: 55px;
  height: 11px;
  border: 1px solid #55779f;
  background: ${BLUE};
`;

const Fields = styled.div<{ $top?: number }>`
  display: grid;
  gap: 3px;
  padding: ${(p) => p.$top ?? 0}px 0 0 5px;
`;

const Field = styled.div`
  display: grid;
  grid-template-columns: 87px 1fr;
  align-items: center;
  height: 31px;
`;

const SpinBox = styled.div`
  display: flex;
  height: 31px;
  min-width: 0;
  border: 1px solid #d0cdca;
  border-right: 0;
  border-radius: 5px 0 0 5px;
  background: #faf9f8;
  overflow: hidden;
  input {
    flex: 1;
    min-width: 0;
    padding: 0 0 1px 8px;
    border: 0;
    background: transparent;
    color: ${DIM};
    font: 12px ${GUEST_FONT};
  }
`;

const Step = styled.button<{ $last?: boolean }>`
  display: flex;
  align-items: center;
  justify-content: ${(p) => (p.$last ? "flex-end" : "center")};
  flex: none;
  width: ${(p) => (p.$last ? 23 : 33)}px;
  border-left: 1px solid #e9e7e5;
`;

const SelectBox = styled.div`
  display: flex;
  align-items: center;
  height: 31px;
  border: 1px solid #d0cdca;
  border-right: 0;
  border-radius: 5px 0 0 5px;
  background: #faf9f8;
  select {
    flex: 1;
    appearance: none;
    padding: 0 0 0 10px;
    border: 0;
    background: transparent;
    color: ${DIM};
    opacity: 1;
    font: 12px ${GUEST_FONT};
  }
  > span { margin-right: 2px; }
`;

const CheckRow = styled.label`
  display: flex;
  align-items: center;
  gap: 4px;
  height: 26px;
  padding-left: 3px;
`;

const RotateGrid = styled.div`
  display: grid;
  grid-template-columns: 87px 49px 1fr;
  grid-template-rows: 31px 31px;
  row-gap: 9px;
  align-items: center;
  padding-left: 5px;
`;

const Dial = styled.svg`
  grid-row: 1 / 3;
  grid-column: 2;
`;

const FlipGroup = styled.div`
  display: flex;
  gap: 22px;
  grid-column: 3;
  padding-left: 13px;
`;

const TabStrip = styled.nav`
  display: flex;
  flex-direction: column;
  gap: 8px;
  flex: none;
  width: 46px;
  padding: 4px 0 0 3px;
`;

const DeckTab = styled.button<{ $active?: boolean }>`
  display: grid;
  place-items: center;
  width: 33px;
  height: 31px;
  border: 1px solid ${(p) => (p.$active ? "#cdccc7" : "transparent")};
  border-radius: 5px;
  background: ${(p) => (p.$active ? "#e4e4df" : "transparent")};
`;

function Spin({ id, value }: { id: string; value: string }) {
  return (
    <SpinBox>
      <input id={id} defaultValue={value} disabled />
      <Step aria-label="Decrease"><svg width="13" height="13" stroke="#d3d3d1" strokeWidth="1.500"><path d="M0 6.500h13" /></svg></Step>
      <Step $last aria-label="Increase"><svg width="13" height="13" stroke="#d3d3d1" strokeWidth="1.500"><path d="M0 6.500h13M6.500 0v13" /></svg></Step>
    </SpinBox>
  );
}

function SpinField({ label, value }: { label: string; value: string }) {
  const id = "f-" + label.replace(/\W/g, "");
  return <Field><label htmlFor={id}>{label}</label><Spin id={id} value={value} /></Field>;
}

function SelectField({ label, value }: { label: string; value: string }) {
  const id = "f-" + label.replace(/\W/g, "");
  return (
    <Field>
      <label htmlFor={id}>{label}</label>
      <SelectBox><select id={id} disabled><option>{value}</option></select><Triangle $size={5} $color="#85888a" /></SelectBox>
    </Field>
  );
}

function Section({ text, open, gap }: { text: string; open?: boolean; gap?: number }) {
  return <SectionHead $open={open} $gap={gap}><Triangle $right={!open} $size={5} $color="#85888a" />{text}</SectionHead>;
}

function Properties() {
  const ticks = Array.from({ length: 32 }, (_, i) => (i * Math.PI) / 16);
  return (
    <Sidebar>
      <PanelHandle $left aria-label="Hide sidebar"><Triangle $right $color="#fff" $size={3} /></PanelHandle>
      <Deck>
        <DeckHeader>
          <Grip />Properties
          <button aria-label="Close"><svg width="9" height="9" stroke="#8b8d8f" strokeWidth="2"><path d="M1 1l7 7M8 1l-7 7" /></svg></button>
        </DeckHeader>
        <Section text="Character" gap={0} />
        <Section text="Paragraph" />
        <Section text="Line" open />
        <LineRows>
          <LineRow>
            <span>Line:</span>
            <StyleButton aria-label="Arrow style">
              <svg width="16" height="11" viewBox="0 0 16 11" stroke="#7fbbe2" fill="#7fbbe2"><path d="M1 3h11M4 9h12" /><path d="M11 1l4 2-4 2zM1 7h3v3H1z" /></svg>
              <Triangle $size={5} $color="#85888a" />
            </StyleButton>
            <Sample $w={78} $h={2} $bg="#fff" /><LineArrow aria-label="Line style"><Triangle $size={4} $color="#85888a" /></LineArrow>
          </LineRow>
          <LineRow><span>Width:</span><Sample $w={70} $h={1} /><LineArrow aria-label="Line width"><Triangle $size={4} $color="#85888a" /></LineArrow></LineRow>
          <LineRow>
            <span>Color:</span>
            <svg width="17" height="14" viewBox="0 0 17 14" fill="none" stroke="#2e3436"><path d="M1 9h7M1 11h15" strokeWidth="2" /><path d="M1 13.500h15" strokeDasharray="2 1" /><path d="M10 6l5-6 1 1-4 6z" /><path d="M6 9q1-4 5-2 0 2-5 2z" fill="#3c8ad0" stroke="none" /></svg>
            <Swatch /><LineArrow $wide aria-label="Line color"><Triangle $size={4} $color="#85888a" /></LineArrow>
          </LineRow>
        </LineRows>
        <Fields>
          <SpinField label="Transparency:" value="0%" />
          <SelectField label="Corner style:" value="Rounded" />
          <SelectField label="Cap style:" value="Flat" />
        </Fields>
        <Section text="Position and Size" open gap={6} />
        <Fields $top={5}>
          <SpinField label="Position X:" value="0.99″" />
          <SpinField label="Position Y:" value="2.95″" />
          <SpinField label="Width:" value="8.59″" />
          <SpinField label="Height:" value="1.58″" />
        </Fields>
        <CheckRow><Check type="checkbox" disabled />Keep ratio</CheckRow>
        <RotateGrid>
          <label htmlFor="rotation">Rotation:</label>
          <Dial width="45" height="45" viewBox="-22 -22 45 45">
            <defs><linearGradient id="dialRing"><stop offset="0" stopColor="#bbb" /><stop offset="1" stopColor="#fff" /></linearGradient></defs>
            <circle r="18" fill="none" stroke="url(#dialRing)" strokeWidth="7" />
            {ticks.map((a, i) => (
              <path key={i} d={`M${Math.cos(a) * 15} ${Math.sin(a) * 15}L${Math.cos(a) * 21} ${Math.sin(a) * 21}`} stroke={i % 8 ? "#9d9f9e" : "#3c3c3c"} />
            ))}
            <path d="M0 0h15" stroke="#2e3436" strokeWidth="1.500" /><circle cx="18" r="3" fill="#3074cc" stroke="#264f84" />
          </Dial>
          <Spin id="rotation" value="0.00°" />
          <span>Flip:</span>
          <FlipGroup>
            <button aria-label="Flip vertically"><svg width="13" height="13" viewBox="0 0 13 13" stroke="#8fa5b3"><path d="M1 5.500L12 1v4.500z" fill="#a3cdec" /><path d="M1 7.500h11V12z" fill="#fff" stroke="#a5a5a5" /></svg></button>
            <button aria-label="Flip horizontally"><svg width="13" height="13" viewBox="0 0 13 13" stroke="#8fa5b3"><path d="M5.500 1v11H1z" fill="#fff" stroke="#a5a5a5" /><path d="M7.500 1v11H12z" fill="#a3cdec" /></svg></button>
          </FlipGroup>
        </RotateGrid>
      </Deck>
      <TabStrip>
        <DeckTab aria-label="Sidebar settings"><svg width="14" height="12" stroke="#85888a" strokeWidth="1.500"><path d="M0 1h14M0 6h14M0 11h14" /></svg></DeckTab>
        <DeckTab $active aria-label="Properties"><svg width="18" height="18" viewBox="0 0 18 18" fill="#fff" stroke="#85888a"><path d="M.5.5h17v17H.5z" /><path d="M1 2h16" strokeWidth="3" /><path d="M4 9h10M4 13h10" stroke="#70aad1" /><path d="M11 8h1v2h-1zM6 12h1v2H6z" fill="#70aad1" stroke="#70aad1" /></svg></DeckTab>
        <DeckTab aria-label="Styles"><svg width="20" height="20" viewBox="0 0 20 20" fill="none" stroke="#929595"><path d="M1 14L6 1h1l5 13M3 9h7" strokeWidth="2" /><path d="M12 13l6-8 2 1-6 9z" fill="#fff" /><path d="M5 19q2-6 8-4 0 4-8 4z" fill="#a5d1f0" stroke="#6fadd8" /></svg></DeckTab>
        <DeckTab aria-label="Gallery"><svg width="20" height="20" viewBox="0 0 20 20" fill="#fdf0dc" stroke="#edbd93"><path d="M1 17V1h6l2 2h9v3M1 17L4 6h16l-2 11z" /><path d="M8 8h11v10H8z" fill="#fff" stroke="#8b8d8f" /><path d="M9 17l3-4 2 2 3-3 1 5z" fill="#a5d1f0" stroke="#6fadd8" /></svg></DeckTab>
        <DeckTab aria-label="Navigator"><svg width="19" height="19" viewBox="0 0 19 19" fill="#fff" stroke="#a1a3a3"><circle cx="9.500" cy="9.500" r="8.500" /><path d="M13 5l-1 6-6 3 1-6z" fill="#a5d1f0" stroke="#61a6d8" /><circle cx="9.500" cy="9.500" r="1" /></svg></DeckTab>
        <DeckTab aria-label="Shapes"><svg width="20" height="20" viewBox="0 0 20 20" fill="#fafafa" stroke="#a1a3a3"><path d="M10 1l9 9-9 9-9-9z" /></svg></DeckTab>
      </TabStrip>
    </Sidebar>
  );
}

/* ---------- Status bar ---------- */

const StatusBar = styled.footer`
  position: relative;
  display: flex;
  flex: none;
  height: 20px;
  border-top: 1px solid #c2c1c0;
  font-size: 11px;
  color: #4b5052;
`;

const StatusCell = styled.div<{ $w?: number; $pad?: number }>`
  display: flex;
  align-items: center;
  gap: 4px;
  flex: ${(p) => (p.$w ? `0 0 ${p.$w}px` : "1")};
  height: 15px;
  margin-top: 2px;
  padding-left: ${(p) => p.$pad ?? 8}px;
  border-right: 1px solid #dddcda;
  white-space: nowrap;
`;

const ZoomRange = styled.input`
  appearance: none;
  flex: none;
  width: 89px;
  height: 14px;
  margin: 0;
  background: linear-gradient(#8b8d8f, #8b8d8f) 43px center / 1px 5px no-repeat, linear-gradient(#a0a2a2, #a0a2a2) center / 100% 2px no-repeat;
  &::-webkit-slider-thumb {
    appearance: none;
    width: 5px;
    height: 9px;
    border: 1px solid #4b5052;
    background: #d8d8d7;
  }
`;

const DockEdge = styled.div`
  position: absolute;
  left: 486px;
  bottom: 0;
  width: 282px;
  height: 3px;
  background: #323236;
`;

function Status() {
  return (
    <StatusBar>
      <StatusCell $w={127} $pad={9}>Slide 1 of 1 (Layout)</StatusCell>
      <StatusCell $w={354} />
      <StatusCell $w={165} $pad={7}>Default</StatusCell>
      <StatusCell $w={167} $pad={8}>
        <svg width="15" height="11" viewBox="0 0 15 11" fill="none" stroke="#4b5052"><path d="M6 3.500h8v7H4V6" /><path d="M0 3.500h6M3.500 0v7" stroke="#308bcf" /></svg>0.99 / 2.95
      </StatusCell>
      <StatusCell $pad={7}>
        <svg width="15" height="13" viewBox="0 0 15 13" fill="none" stroke="#4b5052"><path d="M5.500 5.500h9v6h-9z" /><path d="M5 1.500h9M5.500 0v3M13.500 0v3M2.500 5v7M1 5.500h3M1 11.500h3" stroke="#308bcf" /></svg>8.59 x 1.58
      </StatusCell>
      <StatusCell $w={30} $pad={7}>1:1</StatusCell>
      <StatusCell $w={20} $pad={5}>
        <svg width="12" height="12" viewBox="0 0 12 12" fill="#fff" stroke="#cf3d3d"><path d="M1 1h9l1 1v9H1zM3.500 1v4h5V1M3.500 11V7.500h5V11" /></svg>
      </StatusCell>
      <StatusCell $w={27} />
      <StatusCell $w={21} $pad={4}>
        <svg width="13" height="13" viewBox="0 0 13 13" fill="none" stroke="#308bcf"><path d="M1 6.500h11M6.500 1v11M3 4L.5 6.500 3 9M10 4l2.500 2.500L10 9M4 3L6.500.5 9 3M4 10l2.500 2.500L9 10" /></svg>
      </StatusCell>
      <StatusCell $w={131} $pad={8}>
        <button aria-label="Zoom out"><svg width="10" height="10" stroke={INK} strokeWidth="2"><path d="M0 5h10" /></svg></button>
        <ZoomRange type="range" min="0" max="100" defaultValue="22" aria-label="Zoom" />
        <button aria-label="Zoom in"><svg width="10" height="10" stroke={INK} strokeWidth="2"><path d="M0 5h10M5 0v10" /></svg></button>
      </StatusCell>
      <StatusCell $w={41} />
      <DockEdge />
    </StatusBar>
  );
}

export default function App() {
  return (
    <Screen>
      <GlobalStyle />
      <HostTaskbar />
      <HostFrame />
      <Display>
        <Guest>
          <GuestPanel>
            <AppsButton>
              <svg width="12" height="12" viewBox="0 0 12 12" stroke="#1f9cc9" strokeWidth="3" fill="none"><path d="M1 2l3 2M11 2L8 4M1 10l3-2M11 10L8 8" /><path d="M3 6h6" stroke="#0d3444" /></svg>
              Applications
            </AppsButton>
            <PanelGrip />
            <TaskButton><DrawIcon />Untitled 1 - LibreOffice ...</TaskButton>
            <GuestPager><PagerCell $active><DrawIcon w={13} /></PagerCell><PagerCell /><PagerCell /><PagerCell /></GuestPager>
            <GuestStatus>
              <svg width="15" height="14" viewBox="0 0 15 14" fill="none" stroke="#e8e8e8" strokeWidth="1.200"><path d="M0 5h3l4-4v12L3 9H0z" fill="#e8e8e8" /><path d="M9 4q2 3 0 6M11 2q4 5 0 10M13 1q4 6 0 12" /></svg>
              <svg width="17" height="15" viewBox="0 0 17 15"><path d="M9 0l3 2 4-1-2 3 2 2-4 1-4 1-6 0 4-3-3-1 6-1z" fill="#d8c35a" /><path d="M5 8h6l0 3H6zM6 12h1v3H6zM9 12h1v3H9z" fill="#8b8f93" /></svg>
              <span>Fri 14 Oct, 16:28</span><span>openeuler</span>
            </GuestStatus>
          </GuestPanel>

          <TitleBar>
            <DrawIcon w={18} />
            <span>Untitled 1 - LibreOffice Draw</span>
            <WindowButtons>
              {["M2 8l4-4 4 4", "M2 10h8", "M4 4h5v5H4z", "M2 2l8 8M10 2l-8 8"].map((d, i) => (
                <button key={d} aria-label={["Shade", "Minimize", "Maximize", "Close"][i]}>
                  <svg width="12" height="12" viewBox="0 0 12 12" fill="none" stroke="#2b2b2b" strokeWidth="2"><path d={d} /></svg>
                </button>
              ))}
            </WindowButtons>
          </TitleBar>

          <MenuBar>
            {["File", "Edit", "View", "Insert", "Format", "Page", "Shape", "Tools", "Window", "Help"].map((m) => (
              <MenuHost key={m}>
                <MenuButton $open={m === "Tools"}>{m}</MenuButton>
                {m === "Tools" && <ToolsMenu />}
              </MenuHost>
            ))}
            <MenuClose aria-label="Close document"><svg width="9" height="9" stroke={INK} strokeWidth="2"><path d="M1 1l7 7M8 1l-7 7" /></svg></MenuClose>
          </MenuBar>

          <Toolbar>
            {tools.map((t, i) => {
              if (t === "|") return <ToolRule key={i} />;
              const name = t.replace(/[▾*]/, "");
              return (
                <ToolButton key={i} $drop={t.endsWith("▾")} $active={t.endsWith("*")} aria-label={name}>
                  <Glyph name={name} size={20} />
                  {t.endsWith("▾") && <Triangle />}
                </ToolButton>
              );
            })}
          </Toolbar>

          <Main>
            <DrawBar>
              {drawTools.map((t, i) => {
                if (t === "-") return <DrawRule key={i} />;
                const name = t.replace(/[▾*]/, "");
                return (
                  <DrawButton key={i} $drop={t.endsWith("▾")} $selected={t.endsWith("*")} aria-label={name}>
                    <Glyph name={name} />
                    {t.endsWith("▾") && <Triangle />}
                  </DrawButton>
                );
              })}
            </DrawBar>

            <PagesPanel>
              <PagesHeader>
                Pages
                <button aria-label="Close pages"><svg width="9" height="9" stroke="#a5a6a6"><path d="M1 1l7 7M8 1l-7 7" /></svg></button>
              </PagesHeader>
              <PagesList>
                <Thumb>
                  <span>1</span>
                  <ThumbPage>
                    <svg width="118" height="151" viewBox="171 253 118 151" fill="none" stroke={BLUE}>
                      <path d="M197 285l4 15M198 285c-1 12 8 28 15 28 7 0 8-12 7-25M197 286c8-4 18 1 30 8M238 288l-4 32-3 21-17 16M191 321l98-18M264 299l-66 28M171 329l36-1 18-6M232 307l-22 47" />
                    </svg>
                  </ThumbPage>
                </Thumb>
              </PagesList>
              <PanelHandle aria-label="Hide pages"><svg width="5" height="7" fill="#fff"><path d="M5 0v7L0 3z" /></svg></PanelHandle>
            </PagesPanel>

            <Editing />
            <Properties />
          </Main>
          <Status />
        </Guest>
      </Display>
    </Screen>
  );
}
